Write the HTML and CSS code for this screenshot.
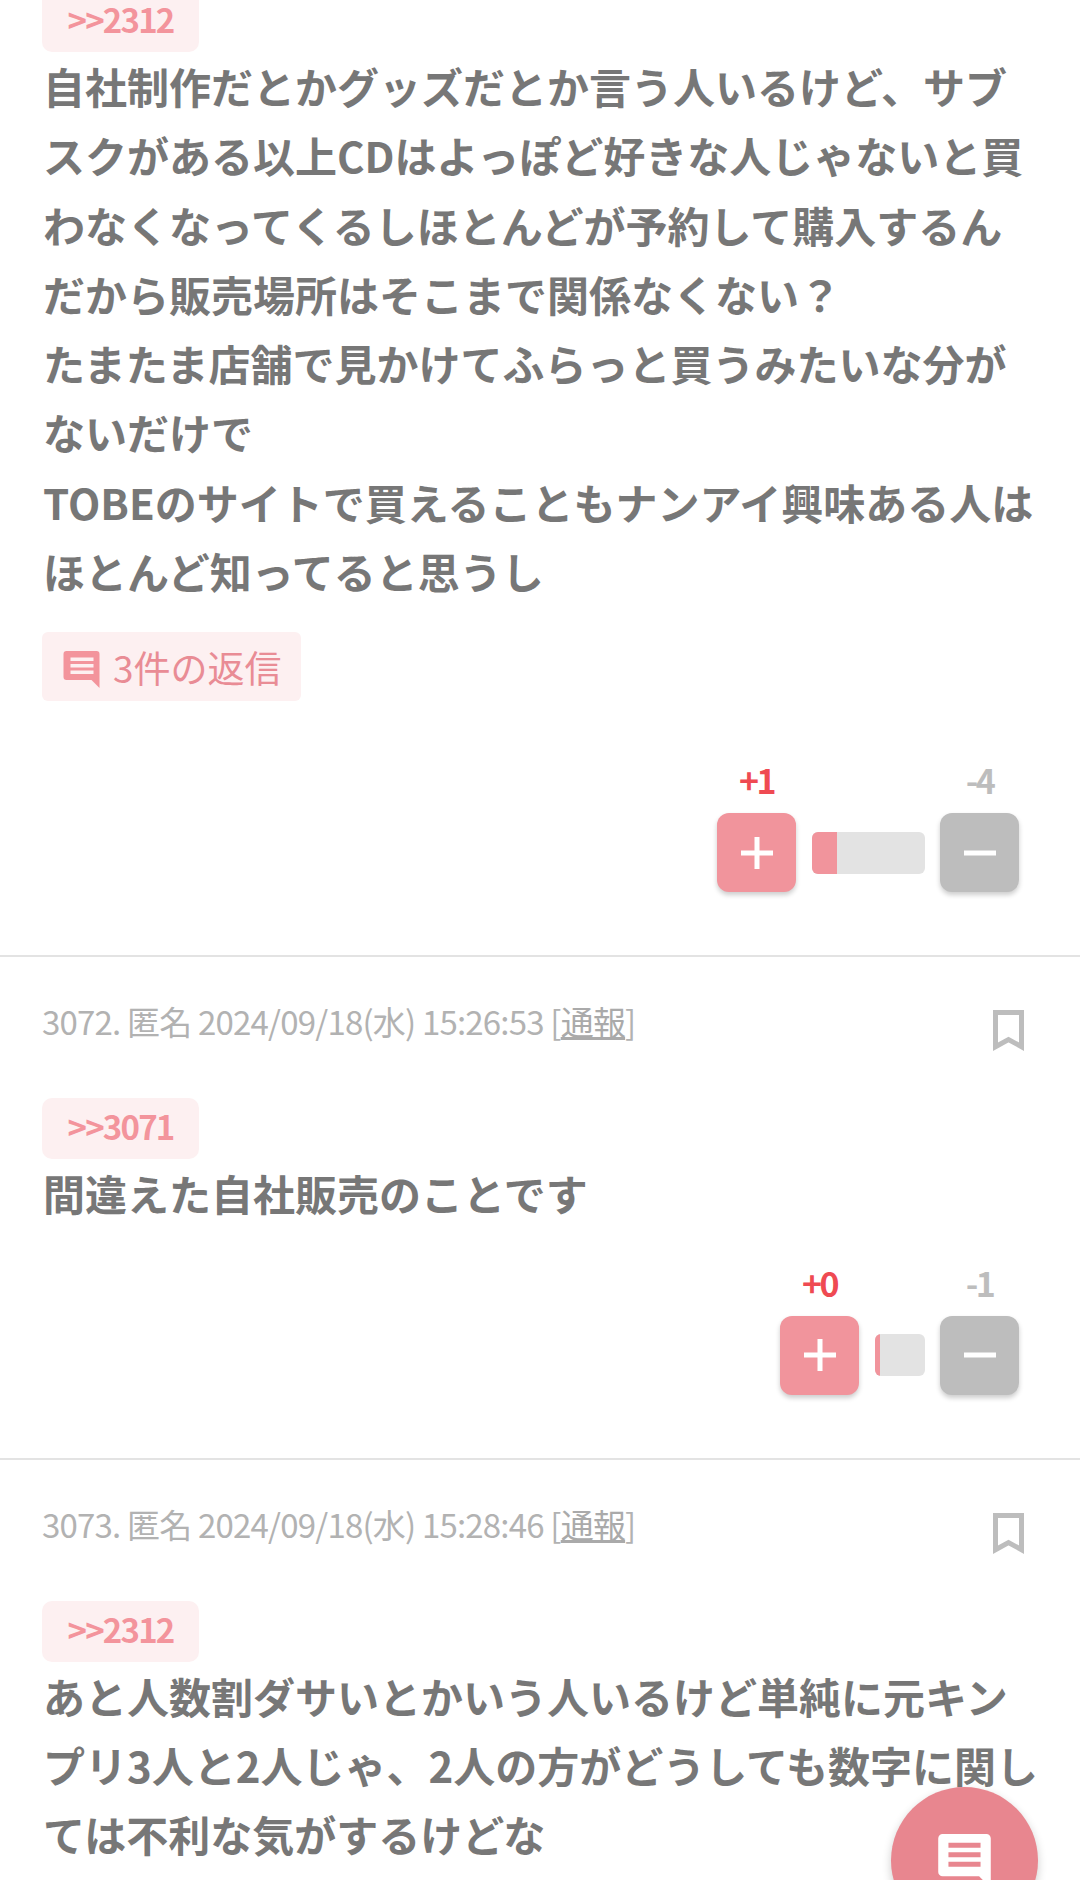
FILE: index.html
```html
<!DOCTYPE html>
<html lang="ja">
<head>
<meta charset="utf-8">
<title>コメント</title>
<link rel="stylesheet" href="styles.css">
</head>
<body>
<main class="thread">
  <article class="post post-first">
    <a class="anchor">&gt;&gt;2312</a>
    <p class="body">自社制作だとかグッズだとか言う人いるけど、サブスクがある以上CDはよっぽど好きな人じゃないと買わなくなってくるしほとんどが予約して購入するんだから販売場所はそこまで関係なくない？<br>たまたま店舗で見かけてふらっと買うみたいな分がないだけで<br>TOBEのサイトで買えることもナンアイ興味ある人はほとんど知ってると思うし</p>
    <a class="replies">
      <svg class="replies-icon" viewBox="0 0 36 37"><path class="bubble" d="M3 0H33a3 3 0 0 1 3 3V37L28 29H3a3 3 0 0 1-3-3V3a3 3 0 0 1 3-3Z"/><path class="bubble-lines" d="M7 6.500H30V10H7ZM7 13H30V16.500H7ZM7 19.500H30V23H7Z"/></svg>
      <span>3件の返信</span>
    </a>
    <div class="vote">
      <div class="vote-side"><span class="count count-plus">+1</span><button class="btn btn-plus"><svg viewBox="0 0 32 32"><path d="M13.500 0h5v13.500h13.500v5H18.500v13.500h-5V18.500H0v-5h13.500Z"/></svg></button></div>
      <div class="meter" style="width:113px"><div class="meter-fill" style="width:25px"></div></div>
      <div class="vote-side"><span class="count count-minus">-4</span><button class="btn btn-minus"><svg viewBox="0 0 32 32"><path d="M0 13.500h32v5H0Z"/></svg></button></div>
    </div>
  </article>

  <article class="post">
    <header class="head">
      <div class="meta">3072. 匿名 2024/09/18(水) 15:26:53 [<u>通報</u>]</div>
      <svg class="mark" viewBox="0 0 31 41"><path d="M2.500 2.500H28.500V36.700L15.500 29.500L2.500 36.700Z"/></svg>
    </header>
    <a class="anchor">&gt;&gt;3071</a>
    <p class="body">間違えた自社販売のことです</p>
    <div class="vote">
      <div class="vote-side"><span class="count count-plus">+0</span><button class="btn btn-plus"><svg viewBox="0 0 32 32"><path d="M13.500 0h5v13.500h13.500v5H18.500v13.500h-5V18.500H0v-5h13.500Z"/></svg></button></div>
      <div class="meter" style="width:50px"><div class="meter-fill" style="width:5px"></div></div>
      <div class="vote-side"><span class="count count-minus">-1</span><button class="btn btn-minus"><svg viewBox="0 0 32 32"><path d="M0 13.500h32v5H0Z"/></svg></button></div>
    </div>
  </article>

  <article class="post">
    <header class="head">
      <div class="meta">3073. 匿名 2024/09/18(水) 15:28:46 [<u>通報</u>]</div>
      <svg class="mark" viewBox="0 0 31 41"><path d="M2.500 2.500H28.500V36.700L15.500 29.500L2.500 36.700Z"/></svg>
    </header>
    <a class="anchor">&gt;&gt;2312</a>
    <p class="body">あと人数割ダサいとかいう人いるけど単純に元キンプリ3人と2人じゃ、2人の方がどうしても数字に関しては不利な気がするけどな</p>
  </article>
</main>
<button class="fab"><svg viewBox="0 0 36 37"><path class="fab-bubble" d="M3 0H33a3 3 0 0 1 3 3V37L28 29H3a3 3 0 0 1-3-3V3a3 3 0 0 1 3-3Z"/><path class="fab-lines" d="M7 6H29V9.500H7ZM7 12.500H29V16H7ZM7 19H29V22.500H7Z"/></svg></button>
</body>
</html>
```
FILE: styles.css
```css
* { box-sizing: border-box; }
html, body { margin: 0; padding: 0; height: 1880px; overflow: hidden; background: #fff; }
body { font-family: "Noto Sans CJK JP", "Noto Sans", sans-serif; color: #777; }
.thread { display: flex; flex-direction: column; }
.post { padding: 0 42px 63px; border-bottom: 2px solid #e3e3e3; }
.post-first { margin-top: -9px; }
.head { display: flex; justify-content: space-between; align-items: flex-start; padding-top: 39px; margin-bottom: 47px; }
.meta { font-size: 33px; line-height: 50px; color: #b2b2b2; letter-spacing: -0.8px; }
.meta u { color: #aaa; }
.mark { width: 31px; height: 41px; margin: 14px 14px 0 0; display: block; }
.mark path { fill: none; stroke: #bdbdbd; stroke-width: 5; }
.anchor { display: block; width: 157px; height: 61px; background: #fdf0f1; border-radius: 10px; color: #f3949c; font-size: 33px; font-weight: 700; line-height: 57px; text-align: center; letter-spacing: -1.800px; }
.body { margin: -1px 0 0; padding-left: 1px; font-size: 42px; font-weight: 700; line-height: 69.3px; color: #777; }
.replies { display: flex; align-items: center; gap: 13px; width: 259px; height: 69px; margin: 27px 0 59px; padding: 0 0 0 21px; background: #fdf0f1; border-radius: 6px; color: #e98c95; font-size: 37px; }
.replies-icon { width: 37px; height: 37px; margin-top: 5px; }
.bubble { fill: #f3949c; }
.bubble-lines { fill: #fdf0f1; }
.vote { display: flex; justify-content: flex-end; align-items: flex-end; gap: 16px; margin: 35px 19px 0 0; }
.vote-side { display: flex; flex-direction: column; align-items: center; gap: 13px; width: 79px; }
.count { font-size: 34px; font-weight: 700; line-height: 40px; letter-spacing: -2.500px; }
.count-plus { color: #ef4a52; }
.count-minus { color: #bdbdbd; }
.btn { display: flex; align-items: center; justify-content: center; width: 79px; height: 79px; padding: 0; border: 0; border-radius: 12px; box-shadow: 0 3px 5px rgba(0, 0, 0, 0.2); }
.btn svg { width: 32px; height: 32px; fill: #fff; }
.btn-plus { background: #f1949c; }
.btn-minus { background: #bdbdbd; }
.meter { height: 42px; margin: 0 -1px 18.500px 0; background: #e3e3e3; border-radius: 6px; overflow: hidden; }
.meter-fill { height: 100%; background: #f1949c; }
.fab { position: fixed; left: 891px; top: 1787px; width: 147px; height: 147px; padding: 0; border: 0; border-radius: 50%; background: #e8868f; box-shadow: 0 4px 10px rgba(0, 0, 0, 0.2); display: flex; justify-content: center; align-items: flex-start; }
.fab svg { width: 53px; height: 54px; margin-top: 47px; }
.fab-bubble { fill: #fff; }
.fab-lines { fill: #e8868f; }
```
